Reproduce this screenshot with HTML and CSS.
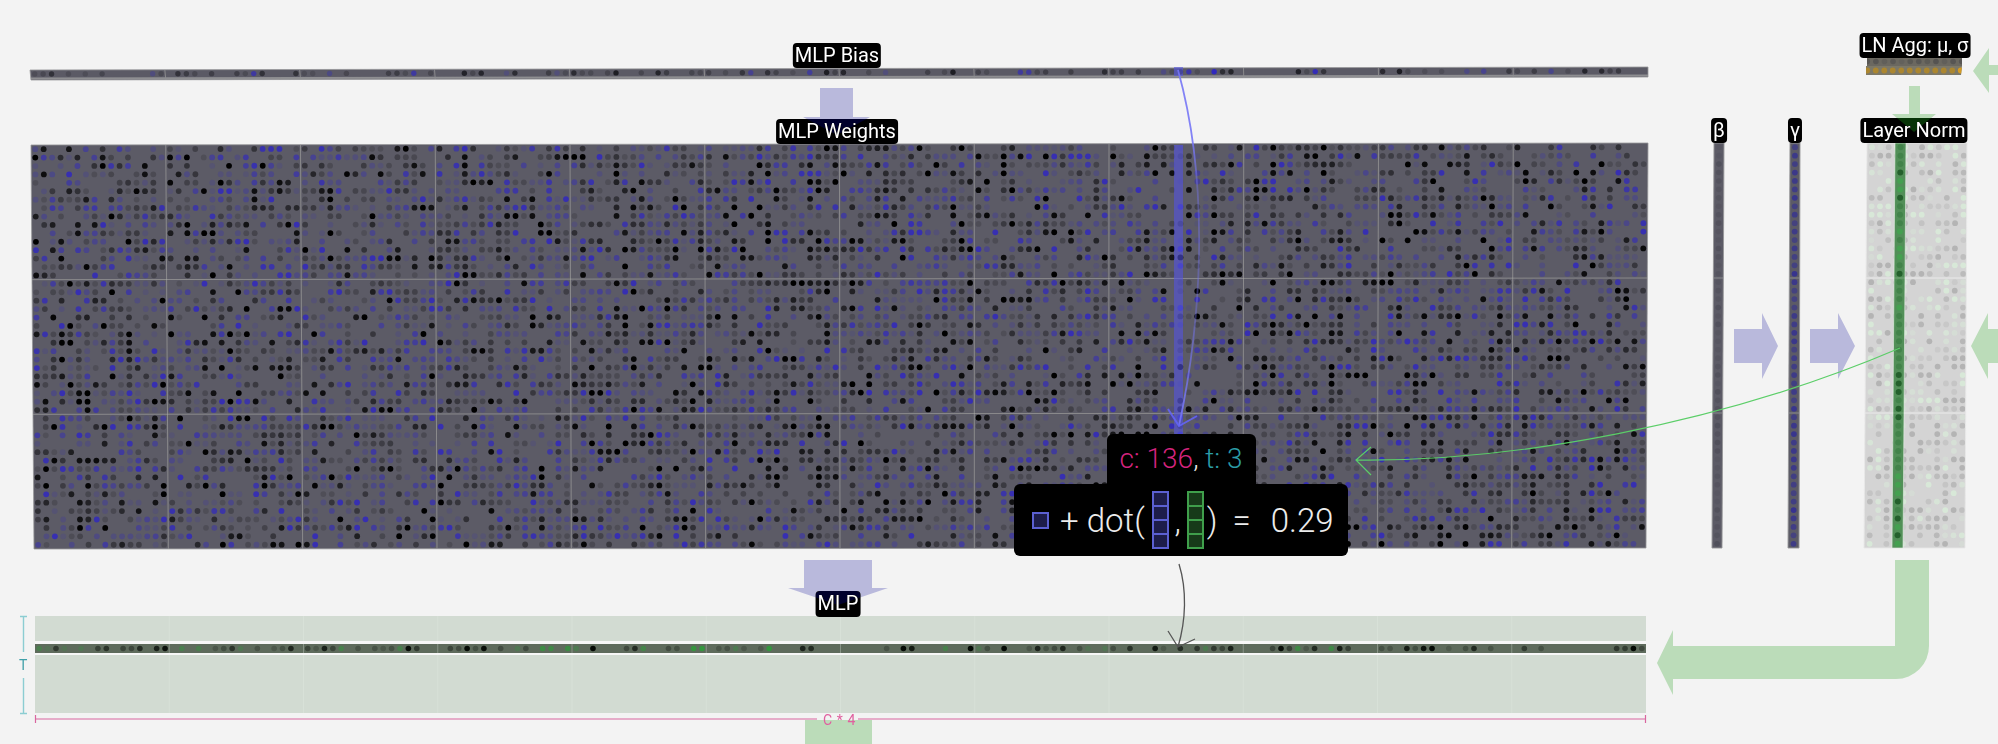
FILE: index.html
```html
<!DOCTYPE html>
<html lang="en">
<head>
<meta charset="utf-8">
<title>GPT block: MLP weights</title>
<link rel="stylesheet" href="styles.css">
</head>
<body>
<main class="stage">
  <canvas id="matrices" class="matrices" width="1998" height="744"></canvas>

  <svg class="flow" width="1998" height="744" viewBox="0 0 1998 744">
    <defs>
      <linearGradient id="link-blue-fade" gradientUnits="userSpaceOnUse" x1="0" y1="70" x2="0" y2="426">
        <stop class="fade-strong" offset="0.2"/>
        <stop class="fade-weak" offset="0.32"/>
        <stop class="fade-weak" offset="0.7"/>
        <stop class="fade-strong" offset="0.95"/>
      </linearGradient>
    </defs>
    <g class="arrow-blue">
      <polygon points="820,88 853,88 853,117 870,117 837,135 803,117 820,117"/>
      <polygon points="804,560 872,560 872,588 888,588 838,605 788,588 804,588"/>
      <polygon points="1734,329 1762,329 1762,313 1778,346 1762,379 1762,363 1734,363"/>
      <polygon points="1810,329 1838,329 1838,313 1855,346 1838,379 1838,363 1810,363"/>
    </g>
    <g class="arrow-green">
      <polygon points="1909,86 1920,86 1920,114 1936,114 1914,132 1892,114 1909,114"/>
      <polygon points="1998,65 1989,65 1989,48 1973,71 1989,93 1989,75 1998,75"/>
      <polygon points="1998,329 1988,329 1988,313 1971,346 1988,379 1988,363 1998,363"/>
      <path d="M1895 560H1929V646A33 33 0 0 1 1896 679H1673V695L1657 663L1673 630V646H1895Z"/>
      <rect x="805" y="720" width="67" height="24"/>
    </g>
    <polygon class="col-blue" points="1174,67 1183,67 1183,76 1174,76"/>
    <polygon class="col-blue" points="1174,145 1183,145 1183,434 1174,434"/>
    <path class="link-blue" d="M1178 70C1206 170 1206 300 1179 426"/>
    <path class="link-blue-head" d="M1168 409L1179 426L1197 416"/>
    <path class="link-green" d="M1900 348C1720 425 1510 462 1356 460M1371 447L1356 460L1371 475"/>
    <path class="link-dark" d="M1179 564C1187 590 1186 620 1178 647M1168 631L1178 647L1195 639"/>
    <g class="dim-t">
      <path d="M20 616.5H27M23.5 616.5V652M23.5 678V713.5M20 713.5H27"/>
    </g>
    <g class="dim-c">
      <path d="M35.5 715V723M35.5 719H817M858 719H1645.5M1645.5 715V723"/>
    </g>
  </svg>

  <span class="dim-label dim-label-t">T</span>
  <span class="dim-label dim-label-c">C * 4</span>

  <span class="tag tag-bias">MLP Bias</span>
  <span class="tag tag-weights">MLP Weights</span>
  <span class="tag tag-mlp">MLP</span>
  <span class="tag tag-beta">β</span>
  <span class="tag tag-gamma">γ</span>
  <span class="tag tag-agg">LN Agg: μ, σ</span>
  <span class="tag tag-norm">Layer Norm</span>

  <svg class="tint" width="1998" height="744" viewBox="0 0 1998 744">
    <polygon class="tint-blue" points="803,117 870,117 837,135"/>
    <polygon class="tint-blue" points="788,588 888,588 838,605"/>
    <polygon class="tint-green" points="1892,114 1936,114 1914,132"/>
  </svg>

  <section class="tip">
    <div class="tip-head"><span class="pink">c: 136</span>, <span class="teal">t: 3</span></div>
    <div class="tip-body">
      <span class="cell-one"></span>
      <span class="tip-plus">+ dot(</span>
      <span class="stack stack-blue"><i></i><i></i><i></i><i></i></span>
      <span class="tip-comma">,</span>
      <span class="stack stack-green"><i></i><i></i><i></i><i></i></span>
      <span class="tip-close">)</span>
      <span class="tip-eq">=</span>
      <span class="tip-val">0.29</span>
    </div>
  </section>
</main>
<script src="script.js"></script>
</body>
</html>
```
FILE: styles.css
```css
html, body {
  margin: 0;
  padding: 0;
  background: #f3f3f3;
  overflow: hidden;
}

.stage {
  position: relative;
  width: 1998px;
  height: 744px;
  font-family: Roboto, "Liberation Sans", sans-serif;
  overflow: hidden;
}

.matrices,
.flow,
.tint {
  position: absolute;
  left: 0;
  top: 0;
}

.matrices {
  filter: blur(0.55px);
}

.tint {
  mix-blend-mode: lighten;
  pointer-events: none;
}

.tint-blue { fill: #00002c; }
.tint-green { fill: #073407; }

.arrow-blue { fill: #b9b9dc; }
.arrow-green { fill: #bbdcb9; }
.col-blue { fill: rgba(84, 84, 225, 0.6); }

.link-blue,
.link-blue-head,
.link-green,
.link-dark {
  fill: none;
}

.fade-strong { stop-color: #7676f6; stop-opacity: 0.9; }
.fade-weak { stop-color: #7676f6; stop-opacity: 0.4; }

.link-blue { stroke: url(#link-blue-fade); stroke-width: 1.8; }
.link-blue-head { stroke: rgba(100, 100, 245, 0.9); stroke-width: 2; }
.link-green { stroke: #5bce68; stroke-width: 1.2; }
.link-dark { stroke: #555; stroke-width: 1.3; }

.dim-t path { stroke: #8ccdd2; stroke-width: 1.4; fill: none; }
.dim-c path { stroke: #d9669f; stroke-width: 1.2; fill: none; }

.dim-label {
  position: absolute;
  font-size: 14px;
  line-height: 16px;
}

.dim-label-t {
  left: 19px;
  top: 657px;
  color: #3f9fa8;
}

.dim-label-c {
  left: 823px;
  top: 712px;
  color: #e0609f;
  letter-spacing: 0.6px;
  white-space: pre;
}

.tag {
  position: absolute;
  box-sizing: border-box;
  height: 25px;
  padding: 0 2px;
  background: #000;
  color: #fff;
  border-radius: 4px;
  font-size: 20px;
  line-height: 25px;
  white-space: nowrap;
  transform: translateX(-50%);
}

.tag-bias { left: 837px; top: 43px; }
.tag-weights { left: 837px; top: 119px; }
.tag-mlp { left: 838px; top: 591px; height: 26px; }
.tag-beta { left: 1719px; top: 118px; }
.tag-gamma { left: 1795px; top: 118px; }
.tag-agg { left: 1915px; top: 33px; }
.tag-norm { left: 1914px; top: 118px; }

.tip {
  position: absolute;
  left: 1014px;
  top: 434px;
  width: 334px;
  display: flex;
  flex-direction: column;
  align-items: center;
  color: #ececec;
  font-weight: 350;
}

.tip-head {
  box-sizing: border-box;
  width: 149px;
  height: 50px;
  background: #000;
  border-radius: 6px 6px 0 0;
  font-size: 28px;
  text-align: center;
  line-height: 50px;
  white-space: pre;
}

.pink { color: #d4247e; }
.teal { color: #2b9ca6; }

.tip-body {
  box-sizing: border-box;
  width: 334px;
  height: 72px;
  background: #000;
  border-radius: 6px;
  display: flex;
  align-items: center;
  padding-left: 18px;
  font-size: 33px;
}

.cell-one {
  box-sizing: border-box;
  width: 17px;
  height: 17px;
  border: 2px solid #5b60d2;
  background: #1d1d4a;
  margin-right: 11px;
}

.tip-plus { margin-right: 7px; white-space: pre; }

.stack {
  box-sizing: border-box;
  width: 17px;
  height: 58px;
  padding: 2px;
  display: flex;
  flex-direction: column;
  gap: 2px;
}

.stack i { flex: 1; display: block; }

.stack-blue { background: #5b60d2; }
.stack-blue i { background: #1d1d4a; }
.stack-green { background: #3f9f4b; }
.stack-green i { background: #173a19; }

.tip-comma { width: 18px; text-align: center; }
.tip-close { margin-left: 3px; }
.tip-eq { margin-left: 15px; }
.tip-val { margin-left: 20px; }
```
FILE: script.js
```js
(function () {
  var canvas = document.getElementById('matrices');
  var ctx = canvas.getContext('2d');

  function rng(seed) {
    return function () {
      seed |= 0; seed = seed + 0x6D2B79F5 | 0;
      var t = Math.imul(seed ^ seed >>> 15, 1 | seed);
      t = t + Math.imul(t ^ t >>> 7, 61 | t) ^ t;
      return ((t ^ t >>> 14) >>> 0) / 4294967296;
    };
  }

  function lerp(a, b, t) { return a + (b - a) * t; }

  // q: top-left, top-right, bottom-right, bottom-left
  function pt(q, u, v) {
    var tx = lerp(q[0][0], q[1][0], u), ty = lerp(q[0][1], q[1][1], u);
    var bx = lerp(q[3][0], q[2][0], u), by = lerp(q[3][1], q[2][1], u);
    return [lerp(tx, bx, v), lerp(ty, by, v)];
  }

  function tracePath(q) {
    ctx.beginPath();
    ctx.moveTo(q[0][0], q[0][1]);
    for (var i = 1; i < 4; i++) ctx.lineTo(q[i][0], q[i][1]);
    ctx.closePath();
  }

  function line(q, u0, v0, u1, v1, color, w) {
    var a = pt(q, u0, v0), b = pt(q, u1, v1);
    ctx.strokeStyle = color;
    ctx.lineWidth = w || 1;
    ctx.beginPath();
    ctx.moveTo(a[0], a[1]);
    ctx.lineTo(b[0], b[1]);
    ctx.stroke();
  }

  function matrix(o) {
    var rand = rng(o.seed);
    ctx.save();
    tracePath(o.quad);
    ctx.fillStyle = o.bg;
    ctx.fill();
    ctx.clip();
    var dq = o.dotQuad || o.quad;
    for (var r = 0; r < o.rows; r++) {
      for (var c = 0; c < o.cols; c++) {
        var color = o.dot(rand, c, r);
        if (!color) continue;
        var p = pt(dq, (c + 0.5) / o.cols, (r + 0.5) / o.rows);
        ctx.fillStyle = color;
        ctx.beginPath();
        ctx.arc(p[0], p[1], o.radius || 2.9, 0, Math.PI * 2);
        ctx.fill();
      }
    }
    if (o.gridX) {
      for (var i = 1; i < o.gridX; i++) line(o.quad, i / o.gridX, 0, i / o.gridX, 1, o.grid, 1);
    }
    if (o.gridY) {
      for (var j = 1; j < o.gridY; j++) line(o.quad, 0, j / o.gridY, 1, j / o.gridY, o.grid, 1);
    }
    ctx.restore();
    if (o.border) {
      tracePath(o.quad);
      ctx.strokeStyle = o.border;
      ctx.lineWidth = 1;
      ctx.stroke();
    }
  }

  function weightDot(rand) {
    var m = Math.pow(rand(), 2.9);
    var blue = rand() < 0.46;
    if (m < 0.03) return null;
    var a = Math.min(1, 0.1 + m * 1.05);
    if (blue) return 'rgba(48,40,190,' + Math.min(0.95, a * 0.85).toFixed(2) + ')';
    return 'rgba(0,0,0,' + a.toFixed(2) + ')';
  }

  function biasDot(rand) {
    var m = Math.pow(rand(), 4);
    if (m < 0.05) return null;
    var a = Math.min(1, 0.15 + m);
    if (rand() < 0.2) return 'rgba(48,40,190,' + a.toFixed(2) + ')';
    return 'rgba(15,15,20,' + (a * 0.8).toFixed(2) + ')';
  }

  var mainGrid = 'rgba(176,176,172,0.55)';

  // MLP bias
  matrix({
    quad: [[30, 70], [1648, 67], [1648, 77], [31, 80]],
    dotQuad: [[30, 70], [1648, 67], [1648, 75], [31, 78]],
    cols: 192, rows: 1, bg: '#5b5a65', seed: 11, dot: biasDot,
    gridX: 12, grid: mainGrid, border: 'rgba(150,150,152,0.8)', radius: 2.7
  });
  line([[31, 78.5], [1648, 75.5], [1648, 77], [31, 80]], 0, 0, 1, 0, '#8e8e91', 2);

  // MLP weights
  matrix({
    quad: [[31, 145], [1648, 143], [1646, 548], [34, 549]],
    cols: 192, rows: 48, bg: '#5c5b66', seed: 42, dot: weightDot,
    gridX: 12, gridY: 3, grid: mainGrid, border: 'rgba(150,150,152,0.8)'
  });

  // beta
  matrix({
    quad: [[1714, 143], [1724, 143], [1722, 548], [1712, 548]],
    cols: 1, rows: 48, bg: '#5c5b66', seed: 7, radius: 2.8,
    dot: function (rand) {
      return 'rgba(60,58,70,' + (0.1 + rand() * 0.25).toFixed(2) + ')';
    },
    gridY: 3, grid: mainGrid, border: 'rgba(150,150,152,0.9)'
  });

  // gamma
  matrix({
    quad: [[1790, 143], [1800, 143], [1799, 548], [1788, 548]],
    cols: 1, rows: 48, bg: '#5c5b66', seed: 8, radius: 2.9,
    dot: function (rand) {
      return 'rgba(48,44,150,' + (0.5 + rand() * 0.35).toFixed(2) + ')';
    },
    gridY: 3, grid: mainGrid, border: 'rgba(150,150,152,0.9)'
  });

  // layer norm scale input
  matrix({
    quad: [[1867, 143], [1967, 143], [1965, 548], [1864, 548]],
    dotQuad: [[1859.5, 143], [1968, 143], [1966, 548], [1857, 548]],
    cols: 13, rows: 48, bg: '#d4d4d4', seed: 23,
    dot: function (rand) {
      var m = Math.pow(rand(), 1.7);
      var green = rand() < 0.45;
      if (m < 0.1) return null;
      if (green) return 'rgba(216,232,216,' + Math.min(1, m * 1.3 + 0.15).toFixed(2) + ')';
      return 'rgba(180,180,180,' + Math.min(1, m * 1.3 + 0.15).toFixed(2) + ')';
    },
    gridY: 3, grid: 'rgba(238,238,238,0.9)', border: 'rgba(232,232,232,0.9)'
  });

  // highlighted layer norm column
  matrix({
    quad: [[1895, 143], [1906, 143], [1903, 548], [1892, 548]],
    cols: 1, rows: 48, bg: '#528f58', seed: 31, radius: 3,
    dot: function (rand) {
      var m = rand();
      if (m < 0.28) return '#24602c';
      if (m < 0.6) return '#44a050';
      return 'rgba(60,125,68,0.7)';
    },
    gridY: 3, grid: 'rgba(150,190,150,0.5)', border: 'rgba(230,240,230,0.6)'
  });

  // aggregates
  matrix({
    quad: [[1867, 57], [1962, 57], [1962, 66], [1867, 66]],
    dotQuad: [[1863, 57], [1966, 57], [1966, 66], [1863, 66]],
    cols: 12, rows: 1, bg: '#6b6860', seed: 5, radius: 2.8,
    dot: function (rand) { return 'rgba(70,70,72,' + (0.15 + rand() * 0.5).toFixed(2) + ')'; }
  });
  matrix({
    quad: [[1866, 66], [1962, 66], [1961, 75], [1866, 75]],
    dotQuad: [[1863, 66], [1965, 66], [1965, 75], [1863, 75]],
    cols: 12, rows: 1, bg: '#7c7868', seed: 6, radius: 2.9,
    dot: function (rand, c) { return c === 11 ? '#d69c22' : '#ab8630'; }
  });

  // MLP output, rows above and below the highlighted one
  var paleGrid = 'rgba(226,234,226,0.4)';
  matrix({
    quad: [[35, 616], [1646, 616], [1646, 641], [35, 641]],
    cols: 192, rows: 3, bg: '#d2dbd2', seed: 1, gridX: 12, grid: paleGrid,
    dot: function () { return null; }
  });
  matrix({
    quad: [[35, 655], [1646, 655], [1646, 713], [35, 713]],
    cols: 192, rows: 7, bg: '#d2dbd2', seed: 2, gridX: 12, grid: paleGrid,
    dot: function () { return null; }
  });
  matrix({
    quad: [[35, 644], [1646, 644], [1646, 653], [35, 653]],
    cols: 192, rows: 1, bg: '#5e6b5c', seed: 3, radius: 2.8,
    gridX: 12, grid: 'rgba(170,180,170,0.55)',
    dot: function (rand) {
      var m = Math.pow(rand(), 3.5);
      if (m < 0.05) return null;
      var a = Math.min(1, 0.12 + m).toFixed(2);
      return rand() < 0.25 ? 'rgba(52,150,62,' + a + ')' : 'rgba(5,10,5,' + a + ')';
    }
  });
  ctx.fillStyle = '#f7f7f7';
  ctx.fillRect(35, 641, 1611, 3);
  ctx.fillRect(35, 653, 1611, 2);
})();
```
